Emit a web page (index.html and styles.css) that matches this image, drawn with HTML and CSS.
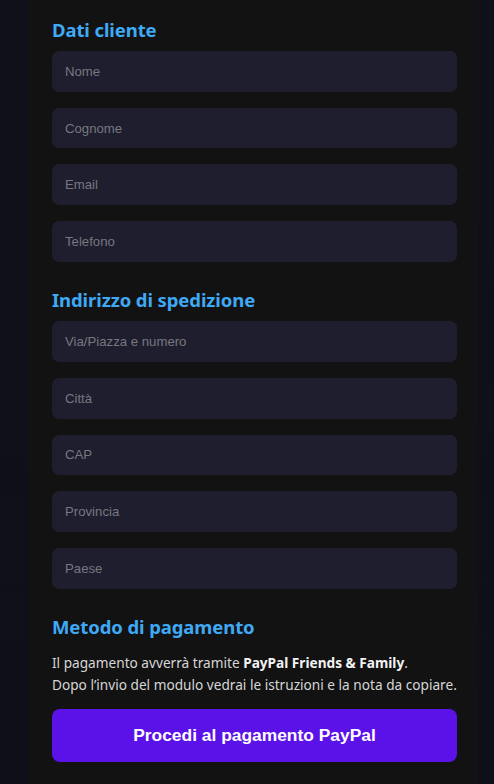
FILE: index.html
```html
<!DOCTYPE html>
<html lang="it">
<head>
<meta charset="utf-8">
<title>Checkout</title>
<link rel="stylesheet" href="styles.css">
</head>
<body>
<div class="page">
  <form class="panel">
    <section class="group">
      <h2 class="title">Dati cliente</h2>
      <input class="field" type="text" placeholder="Nome">
      <input class="field" type="text" placeholder="Cognome">
      <input class="field" type="email" placeholder="Email">
      <input class="field" type="tel" placeholder="Telefono">
    </section>
    <section class="group">
      <h2 class="title">Indirizzo di spedizione</h2>
      <input class="field" type="text" placeholder="Via/Piazza e numero">
      <input class="field" type="text" placeholder="Città">
      <input class="field" type="text" placeholder="CAP">
      <input class="field" type="text" placeholder="Provincia">
      <input class="field" type="text" placeholder="Paese">
    </section>
    <section class="group pay">
      <h2 class="title">Metodo di pagamento</h2>
      <p class="note">Il pagamento avverrà tramite <strong>PayPal Friends &amp; Family</strong>.<br>Dopo l’invio del modulo vedrai le istruzioni e la nota da copiare.</p>
      <button class="submit" type="button">Procedi al pagamento PayPal</button>
    </section>
  </form>
</div>
</body>
</html>
```
FILE: styles.css
```css
html, body {
  margin: 0;
  padding: 0;
  height: 100%;
}
body {
  background: linear-gradient(180deg, #0f101a 0%, #0e0f18 100%);
  font-family: "Noto Sans", "Open Sans", sans-serif;
  overflow: hidden;
}
.page {
  padding: 0 16px 0 28px;
  height: 100%;
}
.panel {
  background: #121212;
  min-height: 100%;
  padding: 18px 21px 40px 24px;
  box-sizing: border-box;
}
.group {
  display: flex;
  flex-direction: column;
  gap: 16px;
}
.group + .group {
  margin-top: 26.5px;
}
.title {
  margin: 0 0 -6px;
  font-size: 18.5px;
  line-height: 23px;
  font-weight: 700;
  color: #3fa9f5;
  letter-spacing: -0.1px;
}
.field {
  display: block;
  width: 100%;
  height: 40.7px;
  box-sizing: border-box;
  border: none;
  outline: none;
  border-radius: 7px;
  background: #1e1e2e;
  padding: 0 13px;
  font-family: "Liberation Sans", Arial, sans-serif;
  font-size: 13.2px;
  color: #e0e0e0;
}
.field::placeholder {
  color: #77777f;
}
.note {
  margin: 4px 0 0;
  font-size: 13.65px;
  line-height: 22px;
  color: #d6d6d6;
}
.note strong {
  color: #f2f2f2;
  font-weight: 700;
}
.submit {
  margin-top: -3px;
  height: 53px;
  width: 100%;
  border: none;
  border-radius: 8px;
  background: #5b12e9;
  color: #ffffff;
  font-family: "Liberation Sans", Arial, sans-serif;
  font-size: 17.4px;
  font-weight: 700;
  cursor: pointer;
}
```
